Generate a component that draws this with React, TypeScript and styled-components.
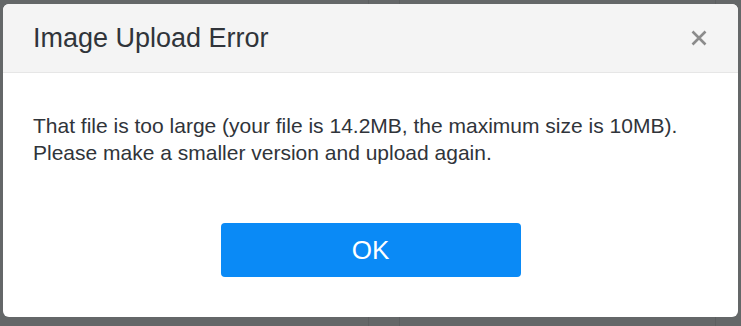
import React from 'react';
import styled, { createGlobalStyle } from 'styled-components';

const GlobalStyle = createGlobalStyle`
    html, body {
        margin: 0;
        padding: 0;
        width: 741px;
        height: 326px;
        overflow: hidden;
        font-family: "Liberation Sans", Arial, sans-serif;
    }
`
const Backdrop = styled.div`
    width: 741px;
    height: 326px;
    box-sizing: border-box;
    padding: 4px 3px 9px 3px;
    background-color: #646768;
    background-image:
        linear-gradient(#5c5f60, #5c5f60),
        linear-gradient(#5c5f60, #5c5f60),
        linear-gradient(#5c5f60, #5c5f60);
    background-size: 1px 100%, 1px 100%, 1px 100%;
    background-position: 368px 0, 399px 0, 715px 0;
    background-repeat: no-repeat;
    display: flex;
`
const Dialog = styled.div`
    flex: 1;
    display: flex;
    flex-direction: column;
    background: #ffffff;
    border-radius: 6px;
    overflow: hidden;
`
const Header = styled.div`
    display: flex;
    align-items: center;
    justify-content: space-between;
    padding: 18px 30px 18px 30px;
    background: #f4f4f4;
    border-bottom: 1px solid #e6e6e6;
`
const Title = styled.h2`
    margin: 0;
    font-size: 27px;
    line-height: 32px;
    font-weight: 400;
    color: #30343a;
`
const CloseButton = styled.button`
    width: 18px;
    height: 18px;
    padding: 0;
    border: none;
    background: none;
    display: flex;
    align-items: center;
    justify-content: center;
    cursor: pointer;
`
const Body = styled.div`
    flex: 1;
    display: flex;
    flex-direction: column;
    padding: 39px 30px 40px 30px;
`
const Message = styled.p`
    margin: 0;
    font-size: 21px;
    line-height: 27px;
    color: #30343a;
`
const Footer = styled.div`
    margin-top: auto;
    display: flex;
    justify-content: center;
`
const OkButton = styled.button`
    width: 300px;
    height: 54px;
    border: none;
    border-radius: 4px;
    background: #0a8af6;
    color: #ffffff;
    font-family: "Liberation Sans", Arial, sans-serif;
    font-size: 26px;
    cursor: pointer;
`

const CloseIcon = () => (
    <svg width="16" height="16" viewBox="0 0 16 16">
        <path d="M1.5 1.5 L14.5 14.5 M14.5 1.5 L1.5 14.5" stroke="#8b8b8b" strokeWidth="2.6" strokeLinecap="butt" />
    </svg>
)

const App = () => {
    return (
        <>
            <GlobalStyle />
            <Backdrop>
                <Dialog role="dialog">
                    <Header>
                        <Title>Image Upload Error</Title>
                        <CloseButton aria-label="Close">
                            <CloseIcon />
                        </CloseButton>
                    </Header>
                    <Body>
                        <Message>
                            That file is too large (your file is 14.2MB, the maximum size is 10MB).
                            <br />
                            Please make a smaller version and upload again.
                        </Message>
                        <Footer>
                            <OkButton>OK</OkButton>
                        </Footer>
                    </Body>
                </Dialog>
            </Backdrop>
        </>
    );
};

export default App;
